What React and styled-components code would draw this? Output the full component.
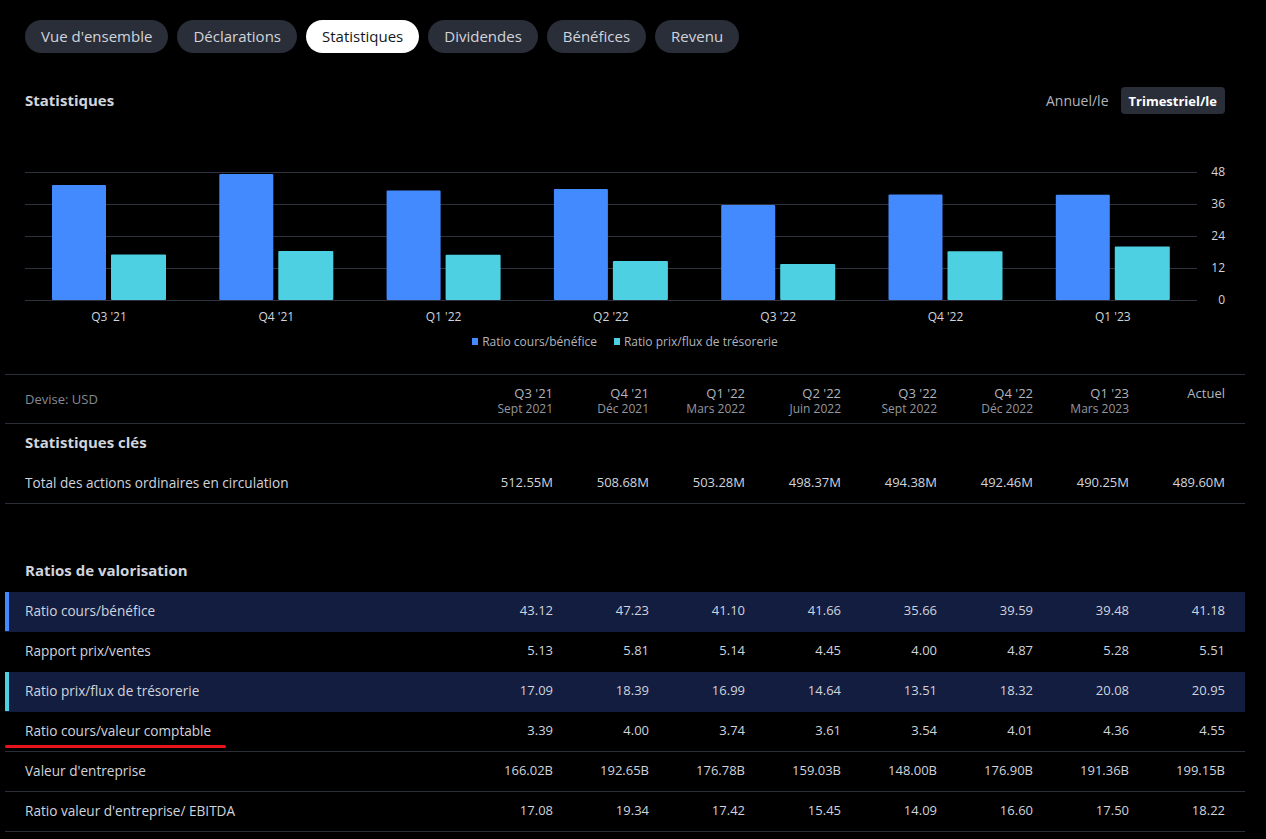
import React from "react";
import styled, { createGlobalStyle } from "styled-components";

const GlobalStyle = createGlobalStyle`
  html, body { margin: 0; padding: 0; background: #000; }
  body { font-family: "Open Sans", "Liberation Sans", Arial, sans-serif; color: #d1d4dc; }
  * { box-sizing: border-box; }
`;

const BLUE = "#448aff";
const CYAN = "#4dd0e1";

const Page = styled.div`
  width: 1266px;
  padding: 20px 21px 8px 5px;
  background: #000;
`;

const Tabs = styled.div`
  display: flex;
  gap: 9px;
  padding-left: 20px;
`;

const Tab = styled.button`
  height: 33px;
  padding: 0 16px 1px;
  border: none;
  border-radius: 17px;
  font-family: inherit;
  font-size: 15px;
  background: ${(p) => (p.$active ? "#fff" : "#2a2e39")};
  color: ${(p) => (p.$active ? "#131722" : "#d1d4dc")};
  cursor: pointer;
`;

const HeaderBar = styled.div`
  display: flex;
  align-items: center;
  justify-content: space-between;
  padding: 0 20px;
  margin-top: 34px;
  height: 27px;
`;

const Title = styled.h2`
  margin: 0 0 2px;
  font-size: 15px;
  font-weight: 700;
  color: #d1d4dc;
`;

const Toggle = styled.div`
  display: flex;
  align-items: center;
  gap: 4px;
`;

const ToggleBtn = styled.button`
  height: 27px;
  padding: 0 8px;
  border: none;
  border-radius: 4px;
  font-family: inherit;
  font-size: ${(p) => (p.$active ? 13 : 14)}px;
  font-weight: ${(p) => (p.$active ? 700 : 400)};
  background: ${(p) => (p.$active ? "#2a2e39" : "transparent")};
  color: ${(p) => (p.$active ? "#fff" : "#b2b5be")};
`;

const ChartWrap = styled.div`
  margin-top: 46px;
  padding-left: 20px;
`;

const ChartSvg = styled.svg`
  display: block;
  font-family: "Open Sans", "Liberation Sans", Arial, sans-serif;
`;

const Legend = styled.div`
  display: flex;
  justify-content: center;
  gap: 17px;
  margin-top: 3px;
  height: 16px;
  align-items: center;
  margin-left: 20px;
  width: 1200px;
`;

const LegendItem = styled.div`
  display: flex;
  align-items: center;
  gap: 4px;
  font-size: 12px;
  color: #b2b5be;
`;

const Swatch = styled.span`
  width: 6px;
  height: 7px;
  background: ${(p) => p.$color};
`;

const Table = styled.div`
  margin-top: 25px;
  border-top: 1px solid #2a2e39;
  width: 1240px;
`;

const HeadRow = styled.div`
  display: grid;
  grid-template-columns: 452px repeat(8, 96px);
  height: 49px;
  border-bottom: 1px solid #2a2e39;
`;

const HeadLabel = styled.div`
  display: flex;
  align-items: center;
  padding-left: 20px;
  font-size: 13px;
  color: #868993;
`;

const HeadCell = styled.div`
  display: flex;
  flex-direction: column;
  align-items: flex-end;
  padding-top: 10px;
`;

const Period = styled.span`
  font-size: 13px;
  line-height: 16px;
  color: #b2b5be;
`;

const PeriodDate = styled.span`
  font-size: 12px;
  line-height: 16px;
  color: #9598a1;
`;

const SectionTitle = styled.div`
  display: flex;
  align-items: center;
  height: 40px;
  padding: 0 0 4px 20px;
  margin-top: ${(p) => p.$gap || 0}px;
  font-size: 15px;
  font-weight: 700;
  color: #d1d4dc;
`;

const Row = styled.div`
  position: relative;
  display: grid;
  grid-template-columns: 452px repeat(8, 96px);
  align-items: center;
  height: 40px;
  padding-bottom: 3px;
  background: ${(p) => (p.$accent ? "#131d40" : "transparent")};
  border-bottom: 1px solid ${(p) => (p.$divider ? "#2a2e39" : "transparent")};
  box-shadow: ${(p) => (p.$accent ? `inset 4px 0 0 ${p.$accent}` : "none")};
`;

const RowLabel = styled.div`
  padding-left: 20px;
  font-size: 13.6px;
  color: #d1d4dc;
`;

const Value = styled.div`
  text-align: right;
  font-size: 13px;
  color: #d1d4dc;
`;

const Underline = styled.span`
  position: absolute;
  left: 0;
  top: 33px;
  width: 221px;
  height: 3px;
  border-radius: 2px;
  background: #e8141c;
`;

const periods = [
  ["Q3 '21", "Sept 2021"],
  ["Q4 '21", "Déc 2021"],
  ["Q1 '22", "Mars 2022"],
  ["Q2 '22", "Juin 2022"],
  ["Q3 '22", "Sept 2022"],
  ["Q4 '22", "Déc 2022"],
  ["Q1 '23", "Mars 2023"],
];

const pe = [43.12, 47.23, 41.1, 41.66, 35.66, 39.59, 39.48];
const pcf = [17.09, 18.39, 16.99, 14.64, 13.51, 18.32, 20.08];

const ratioRows = [
  { label: "Ratio cours/bénéfice", accent: BLUE, values: ["43.12", "47.23", "41.10", "41.66", "35.66", "39.59", "39.48", "41.18"] },
  { label: "Rapport prix/ventes", values: ["5.13", "5.81", "5.14", "4.45", "4.00", "4.87", "5.28", "5.51"] },
  { label: "Ratio prix/flux de trésorerie", accent: CYAN, values: ["17.09", "18.39", "16.99", "14.64", "13.51", "18.32", "20.08", "20.95"] },
  { label: "Ratio cours/valeur comptable", divider: true, underline: true, values: ["3.39", "4.00", "3.74", "3.61", "3.54", "4.01", "4.36", "4.55"] },
  { label: "Valeur d'entreprise", divider: true, values: ["166.02B", "192.65B", "176.78B", "159.03B", "148.00B", "176.90B", "191.36B", "199.15B"] },
  { label: "Ratio valeur d'entreprise/ EBITDA", divider: true, values: ["17.08", "19.34", "17.42", "15.45", "14.09", "16.60", "17.50", "18.22"] },
];

const Chart = () => {
  const pitch = 167.3;
  const base = 140;
  const unit = 128 / 48;
  const ticks = [48, 36, 24, 12, 0];
  return (
    <ChartSvg width="1220" height="170" viewBox="0 0 1220 170">
      {ticks.map((t) => {
        const y = base - t * unit;
        return (
          <g key={t}>
            <line x1="0" x2="1172" y1={y + 0.5} y2={y + 0.5} stroke="#2e3240" strokeWidth="1" />
            <text x="1200" y={y + 1} fill="#d1d4dc" fontSize="12" textAnchor="end" dominantBaseline="middle">
              {t}
            </text>
          </g>
        );
      })}
      {periods.map(([q], i) => {
        const x0 = i * pitch;
        const hb = pe[i] * unit;
        const hc = pcf[i] * unit;
        return (
          <g key={q}>
            <rect x={x0 + 27} y={base - hb} width="54" height={hb} rx="1" fill={BLUE} />
            <rect x={x0 + 86} y={base - hc} width="55" height={hc} rx="1" fill={CYAN} />
            <text x={x0 + 84} y="158" fill="#d1d4dc" fontSize="12" textAnchor="middle" dominantBaseline="middle">
              {q}
            </text>
          </g>
        );
      })}
    </ChartSvg>
  );
};

const tabs = ["Vue d'ensemble", "Déclarations", "Statistiques", "Dividendes", "Bénéfices", "Revenu"];

export default function App() {
  return (
    <Page>
      <GlobalStyle />
      <Tabs>
        {tabs.map((t) => (
          <Tab key={t} $active={t === "Statistiques"}>
            {t}
          </Tab>
        ))}
      </Tabs>
      <HeaderBar>
        <Title>Statistiques</Title>
        <Toggle>
          <ToggleBtn>Annuel/le</ToggleBtn>
          <ToggleBtn $active>Trimestriel/le</ToggleBtn>
        </Toggle>
      </HeaderBar>
      <ChartWrap>
        <Chart />
      </ChartWrap>
      <Legend>
        <LegendItem>
          <Swatch $color={BLUE} />
          Ratio cours/bénéfice
        </LegendItem>
        <LegendItem>
          <Swatch $color={CYAN} />
          Ratio prix/flux de trésorerie
        </LegendItem>
      </Legend>
      <Table>
        <HeadRow>
          <HeadLabel>Devise: USD</HeadLabel>
          {periods.map(([q, d]) => (
            <HeadCell key={q}>
              <Period>{q}</Period>
              <PeriodDate>{d}</PeriodDate>
            </HeadCell>
          ))}
          <HeadCell>
            <Period>Actuel</Period>
          </HeadCell>
        </HeadRow>
        <SectionTitle>Statistiques clés</SectionTitle>
        <Row $divider>
          <RowLabel>Total des actions ordinaires en circulation</RowLabel>
          {["512.55M", "508.68M", "503.28M", "498.37M", "494.38M", "492.46M", "490.25M", "489.60M"].map((v, i) => (
            <Value key={i}>{v}</Value>
          ))}
        </Row>
        <SectionTitle $gap={48}>Ratios de valorisation</SectionTitle>
        {ratioRows.map((r) => (
          <Row key={r.label} $accent={r.accent} $divider={r.divider}>
            <RowLabel>{r.label}</RowLabel>
            {r.values.map((v, i) => (
              <Value key={i}>{v}</Value>
            ))}
            {r.underline && <Underline />}
          </Row>
        ))}
      </Table>
    </Page>
  );
}
